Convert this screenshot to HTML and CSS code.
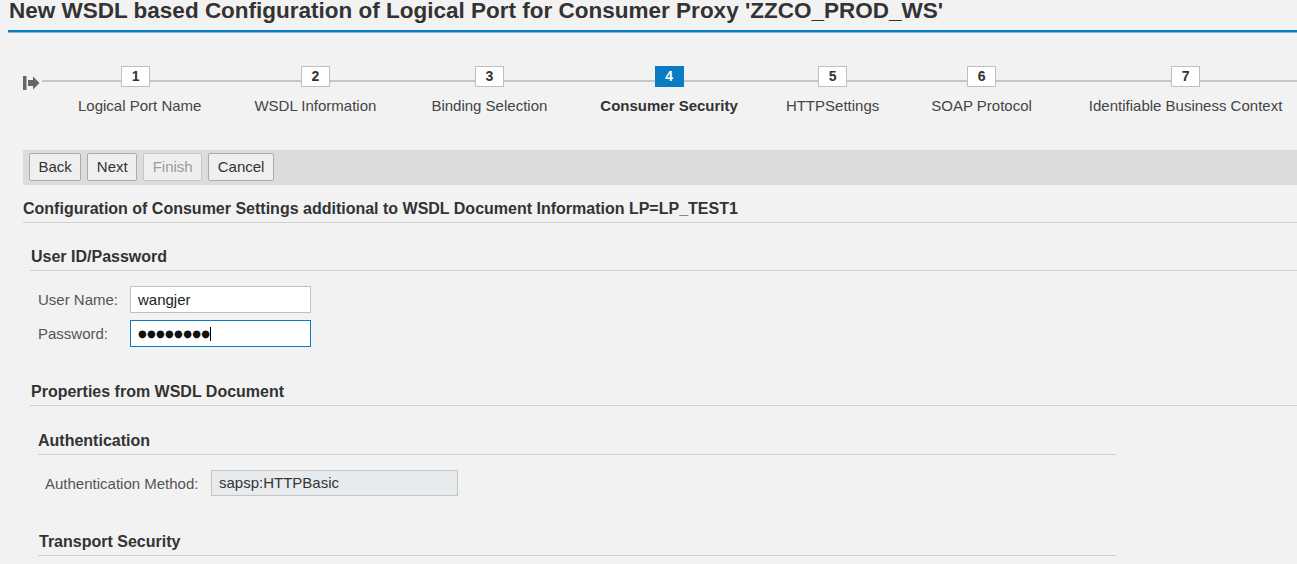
FILE: index.html
```html
<!DOCTYPE html>
<html>
<head>
<meta charset="utf-8">
<title>New WSDL based Configuration of Logical Port</title>
<link rel="stylesheet" href="styles.css">
</head>
<body>
<div class="page">
  <header class="title-bar">
    <h1 class="title">New WSDL based Configuration of Logical Port for Consumer Proxy 'ZZCO_PROD_WS'</h1>
  </header>

  <nav class="roadmap">
    <svg class="start-icon" width="17" height="14" viewBox="0 0 17 14">
      <rect x="0" y="0" width="3.5" height="14" fill="#666"/>
      <polygon points="5,4 10,4 10,0.5 16.5,7 10,13.5 10,10 5,10" fill="#666"/>
    </svg>
    <ol class="steps">
      <li class="step"><span class="step-num">1</span><span class="step-label">Logical Port Name</span></li>
      <li class="step"><span class="step-num">2</span><span class="step-label">WSDL Information</span></li>
      <li class="step"><span class="step-num">3</span><span class="step-label">Binding Selection</span></li>
      <li class="step step-active"><span class="step-num">4</span><span class="step-label">Consumer Security</span></li>
      <li class="step"><span class="step-num">5</span><span class="step-label">HTTPSettings</span></li>
      <li class="step"><span class="step-num">6</span><span class="step-label">SOAP Protocol</span></li>
      <li class="step"><span class="step-num">7</span><span class="step-label">Identifiable Business Context</span></li>
    </ol>
  </nav>

  <div class="toolbar">
    <button class="btn">Back</button>
    <button class="btn">Next</button>
    <button class="btn btn-disabled">Finish</button>
    <button class="btn">Cancel</button>
  </div>

  <main class="content">
    <h2 class="section-title">Configuration of Consumer Settings additional to WSDL Document Information LP=LP_TEST1</h2>

    <section class="group group-user">
      <h3 class="group-title">User ID/Password</h3>
      <div class="form">
        <div class="form-row">
          <span class="form-label">User Name:</span>
          <div class="field">wangjer</div>
        </div>
        <div class="form-row">
          <span class="form-label">Password:</span>
          <div class="field field-focus"><span class="dots">●●●●●●●●</span><span class="caret"></span></div>
        </div>
      </div>
    </section>

    <section class="group group-props">
      <h3 class="group-title">Properties from WSDL Document</h3>
      <div class="subgroup subgroup-auth">
        <h4 class="sub-title">Authentication</h4>
        <div class="form-row form-row-sub">
          <span class="form-label form-label-auth">Authentication Method:</span>
          <div class="field field-readonly">sapsp:HTTPBasic</div>
        </div>
      </div>
      <div class="subgroup subgroup-transport">
        <h4 class="sub-title sub-title-transport">Transport Security</h4>
      </div>
    </section>
  </main>
</div>
</body>
</html>
```

FILE: styles.css
```css
* { box-sizing: border-box; }

html, body {
  margin: 0;
  padding: 0;
  background: #f2f2f2;
}

body {
  font-family: "Liberation Sans", Arial, sans-serif;
  color: #333;
  overflow: hidden;
  height: 564px;
}

.page {
  width: 1297px;
}

/* Title */
.title-bar {
  margin-left: 8px;
  height: 32px;
  border-bottom: 2px solid #0a7ac3;
  box-shadow: 0 1px 0 #7db7e0;
  padding-left: 1px;
}

.title {
  margin: 0;
  font-size: 22.5px;
  line-height: 22px;
  font-weight: bold;
  color: #333;
  white-space: nowrap;
}

/* Roadmap */
.roadmap {
  height: 118px;
  padding: 34px 0 0 23px;
  display: flex;
  align-items: flex-start;
  background-image: linear-gradient(#c6c6c6, #c6c6c6);
  background-repeat: no-repeat;
  background-size: calc(100% - 42px) 2px;
  background-position: 42px 48px;
}

.start-icon {
  margin-top: 10px;
  flex: none;
}

.steps {
  list-style: none;
  margin: 0 0 0 38px;
  padding: 0;
  display: flex;
  gap: 54px;
}

.step {
  display: flex;
  flex-direction: column;
  align-items: center;
}

.step:nth-child(2) { margin-left: -1px; }
.step:nth-child(3) { margin-left: 1px; }
.step:nth-child(4) { margin-left: -1px; }
.step:nth-child(5) { margin-left: -6px; }
.step:nth-child(6) { margin-left: -2px; }
.step:nth-child(7) { margin-left: 3px; }

.step-num {
  width: 29px;
  height: 21px;
  background: #fff;
  border: 1px solid #bfbfbf;
  font-size: 14px;
  font-weight: bold;
  line-height: 19px;
  text-align: center;
  color: #333;
}

.step:first-child .step-num {
  margin-right: 8px;
}

.step-label {
  margin-top: 10px;
  font-size: 15px;
  line-height: 18px;
  color: #444;
  white-space: nowrap;
}

.step-active .step-num {
  background: #0a7cc4;
  border-color: #0a7cc4;
  color: #fff;
}

.step-active .step-label {
  font-weight: bold;
  color: #333;
}

/* Toolbar */
.toolbar {
  margin-left: 23px;
  height: 35px;
  background: #dcdcdc;
  padding: 3px 6px;
  display: flex;
  gap: 6px;
}

.btn {
  height: 28px;
  padding: 0 8.5px;
  font-family: "Liberation Sans", Arial, sans-serif;
  font-size: 15px;
  color: #333;
  background: #efefef;
  border: 1px solid #ababab;
  border-radius: 2px;
  line-height: 26px;
}

.btn-disabled {
  color: #9a9a9a;
  border-color: #c6c6c6;
}

/* Content */
.content {
  margin-left: 23px;
}

.section-title {
  margin: 15px 0 0 0;
  font-size: 16px;
  line-height: 18px;
  font-weight: bold;
  color: #333;
  padding-bottom: 4px;
  border-bottom: 1px solid #cfcfcf;
}

.group {
  margin-left: 7px;
}

.group-title {
  margin: 0;
  font-size: 16px;
  line-height: 18px;
  font-weight: bold;
  color: #333;
  padding: 0 0 4px 1px;
  border-bottom: 1px solid #cfcfcf;
}

.group-user {
  margin-top: 25px;
}

.group-props {
  margin-top: 36px;
}

.form {
  margin-top: 15px;
  padding-left: 8px;
  display: flex;
  flex-direction: column;
  gap: 7px;
}

.form-row {
  display: flex;
  align-items: center;
}

.form-label {
  width: 92px;
  font-size: 15px;
  color: #555;
}

.field {
  width: 181px;
  height: 27px;
  border: 1px solid #c0c0c0;
  background: #fff;
  font-size: 15px;
  line-height: 25px;
  padding-left: 7px;
  color: #222;
  display: flex;
  align-items: center;
}

.field-focus {
  border-color: #0a7cc4;
}

.dots {
  font-family: "DejaVu Sans", sans-serif;
  font-size: 10px;
  letter-spacing: 0.3px;
  color: #111;
  line-height: 25px;
}

.caret {
  width: 1px;
  height: 14px;
  background: #000;
}

.subgroup {
  margin-left: 8px;
  width: 1078px;
}

.subgroup-auth {
  margin-top: 26px;
}

.sub-title {
  margin: 0;
  font-size: 16px;
  line-height: 18px;
  font-weight: bold;
  color: #333;
  padding: 0 0 4px 0;
  border-bottom: 1px solid #cfcfcf;
}

.sub-title-transport {
  padding-left: 1px;
}

.form-row-sub {
  margin-top: 15px;
  padding-left: 7px;
}

.form-label-auth {
  width: 166px;
}

.field-readonly {
  width: 247px;
  height: 26px;
  background: #e8ebee;
  border-color: #c4c4c4;
  color: #333;
  line-height: 24px;
}

.subgroup-transport {
  margin-top: 37px;
}
```
